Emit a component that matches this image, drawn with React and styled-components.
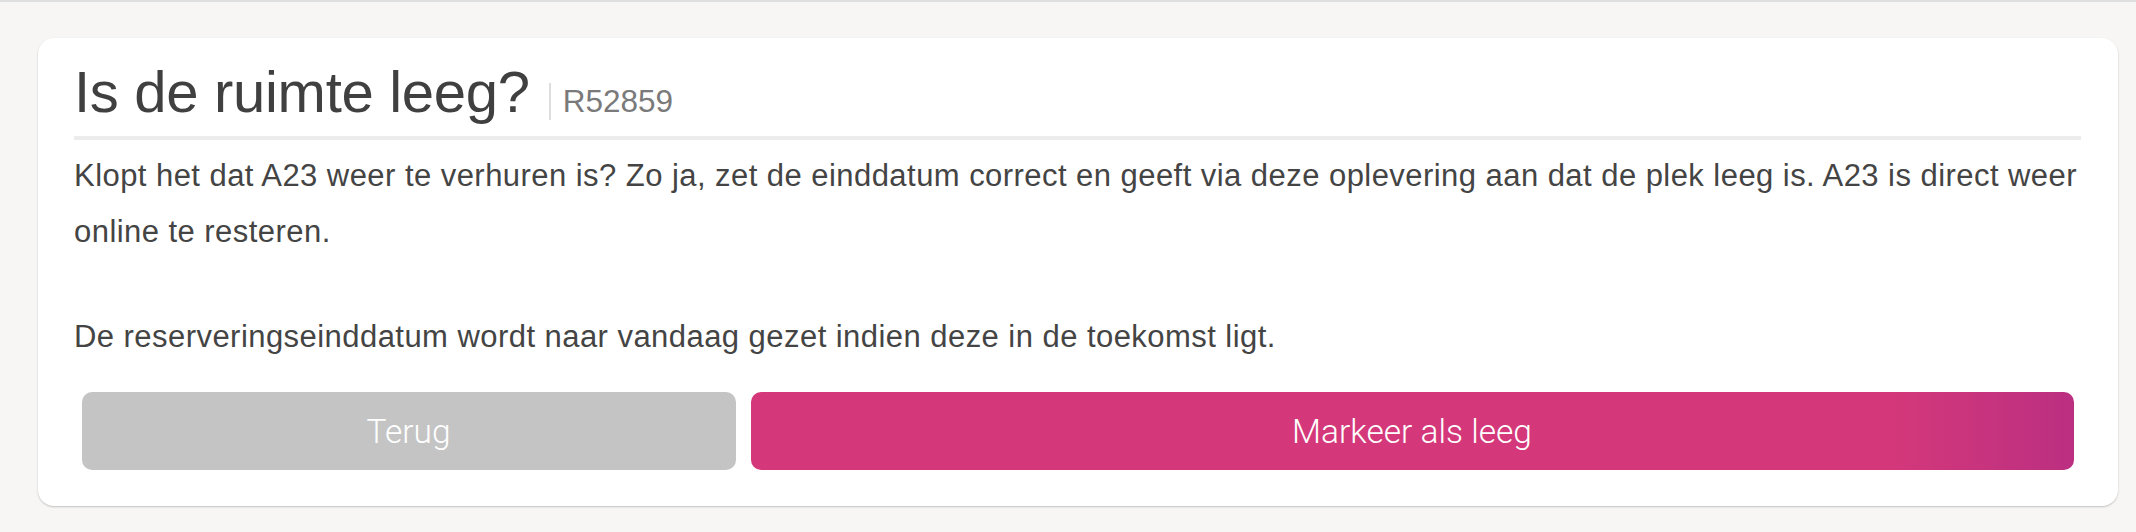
import React from "react";
import styled, { createGlobalStyle } from "styled-components";

const GlobalStyle = createGlobalStyle`
  html, body {
    margin: 0;
    padding: 0;
    background: #f7f6f4;
  }
  body {
    font-family: "Liberation Sans", Arial, Helvetica, sans-serif;
    color: #444;
  }
`;

export default function App() {
  return (
    <>
      <GlobalStyle />
      <Page>
        <Card>
          <Header>
            <Title>Is de ruimte leeg?</Title>
            <Reference>R52859</Reference>
          </Header>
          <Body>
            <Paragraph>
              Klopt het dat A23 weer te verhuren is? Zo ja, zet de einddatum correct en geeft via deze
              oplevering aan dat de plek leeg is. A23 is direct weer online te resteren.
            </Paragraph>
            <Paragraph>
              De reserveringseinddatum wordt naar vandaag gezet indien deze in de toekomst ligt.
            </Paragraph>
          </Body>
          <Actions>
            <ActionCol $span={1}>
              <Button $variant="secondary">Terug</Button>
            </ActionCol>
            <ActionCol $span={2}>
              <Button $variant="primary">Markeer als leeg</Button>
            </ActionCol>
          </Actions>
        </Card>
      </Page>
    </>
  );
}

const Page = styled.div`
  min-height: 532px;
  box-sizing: border-box;
  border-top: 2px solid #dedede;
  padding: 36px 18px 26px 38px;
`;

const Card = styled.div`
  background: #fff;
  border-radius: 16px;
  box-shadow: 0 1px 2px rgba(0, 0, 0, 0.22);
  padding: 20px 37px 36px 36px;
`;

const Header = styled.div`
  display: flex;
  align-items: baseline;
  padding-bottom: 11px;
  border-bottom: 4px solid #ececec;
`;

const Title = styled.h1`
  margin: 0;
  font-size: 58px;
  font-weight: 400;
  line-height: normal;
  color: #404040;
  letter-spacing: -0.3px;
`;

const Reference = styled.span`
  margin-left: 19px;
  padding-left: 12px;
  border-left: 2px solid #dddddd;
  font-size: 31.5px;
  line-height: normal;
  color: #7a7a7a;
`;

const Body = styled.div`
  padding-top: 8px;
`;

const Paragraph = styled.p`
  margin: 0 0 49px;
  font-size: 31px;
  letter-spacing: 0.45px;
  line-height: 56px;
  color: #444;

  &:last-child {
    margin-bottom: 0;
  }
`;

const Actions = styled.div`
  display: flex;
  margin-top: 27px;
`;

const ActionCol = styled.div`
  box-sizing: border-box;
  flex: 0 0 ${(p) => (p.$span / 3) * 100}%;
  padding: 0 7.5px;
`;

const Button = styled.button`
  display: block;
  width: 100%;
  height: 78px;
  border: none;
  border-radius: 10px;
  font-family: "Roboto", "Liberation Sans", sans-serif;
  font-weight: 300;
  font-size: 33.5px;
  color: #fff;
  cursor: pointer;
  background: ${(p) =>
    p.$variant === "primary"
      ? "linear-gradient(90deg, #d4387a 0%, #d4387a 86%, #bb2f81 100%)"
      : "#c4c4c4"};
`;
